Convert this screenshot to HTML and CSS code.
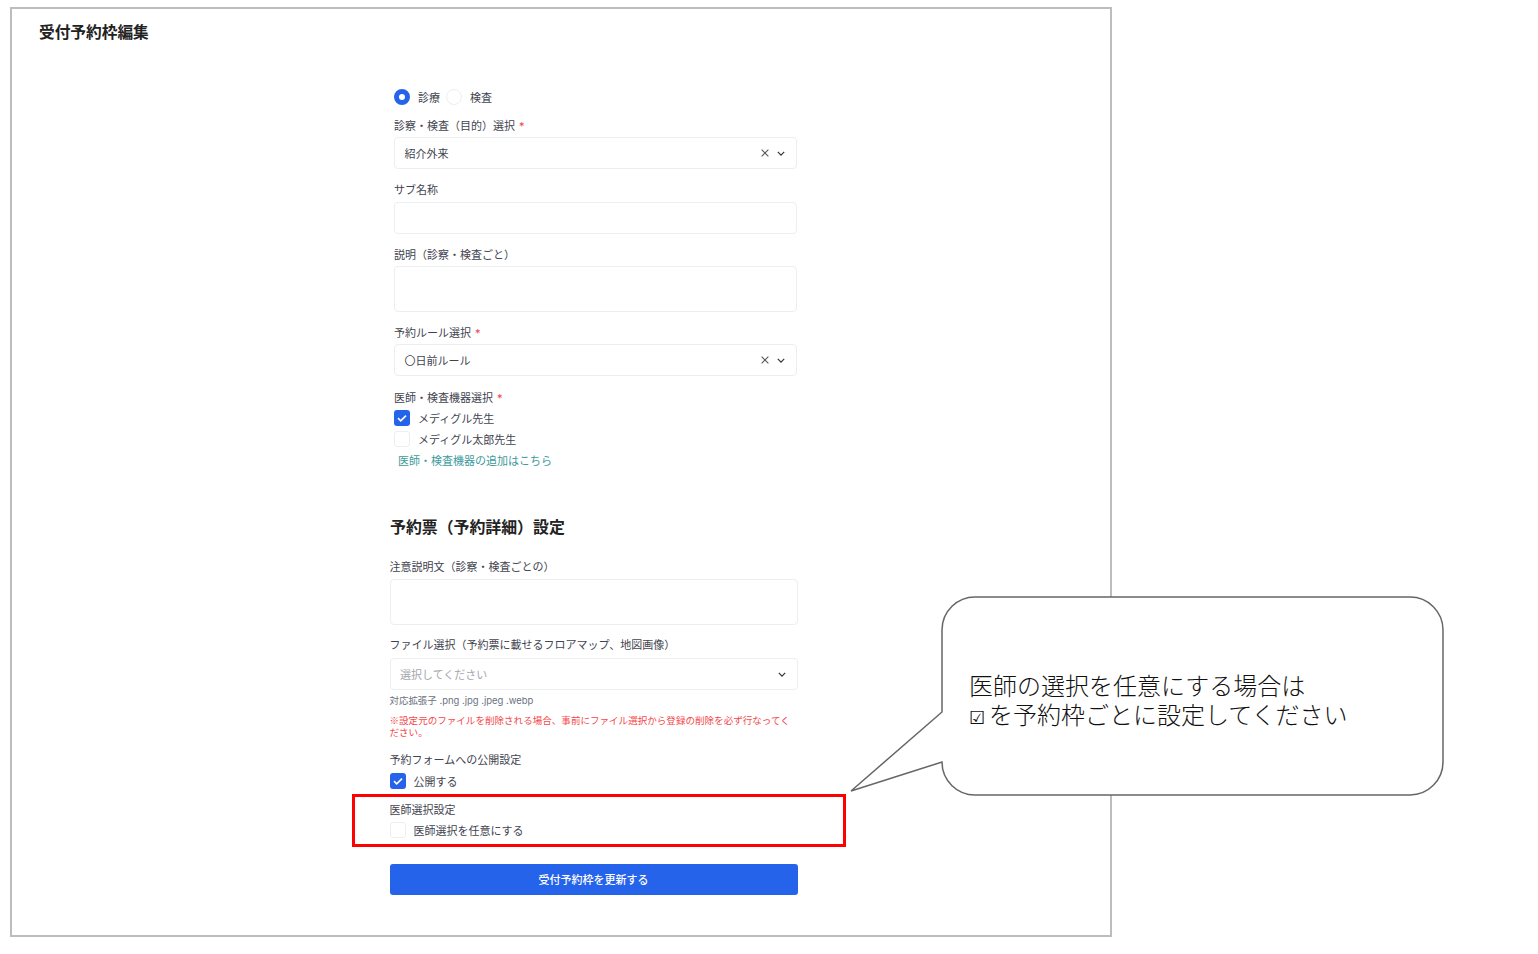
FILE: index.html
```html
<!DOCTYPE html>
<html lang="ja">
<head>
<meta charset="utf-8">
<title>受付予約枠編集</title>
<link rel="stylesheet" href="styles.css">
</head>
<body>
<main class="frame">
  <h1 class="title">受付予約枠編集</h1>
  <form class="form">
    <div class="upper">
      <div class="radios">
        <span class="radio radio-on"></span><span class="opt">診療</span>
        <span class="radio"></span><span class="opt">検査</span>
      </div>
      <div class="label">診察・検査（目的）選択<span class="req">*</span></div>
      <div class="box select"><span class="value">紹介外来</span>
        <svg class="ic-x" viewBox="0 0 10 10"><path d="M.8.8l8.4 8.4M9.2.8L.8 9.2"/></svg>
        <svg class="ic-chev" viewBox="0 0 10 6"><path d="M1 1l4 4 4-4"/></svg>
      </div>
      <div class="label roomy">サブ名称</div>
      <div class="box"></div>
      <div class="label">説明（診察・検査ごと）</div>
      <div class="box tall"></div>
      <div class="label">予約ルール選択<span class="req">*</span></div>
      <div class="box select"><span class="value">〇日前ルール</span>
        <svg class="ic-x" viewBox="0 0 10 10"><path d="M.8.8l8.4 8.4M9.2.8L.8 9.2"/></svg>
        <svg class="ic-chev" viewBox="0 0 10 6"><path d="M1 1l4 4 4-4"/></svg>
      </div>
      <div class="label loose">医師・検査機器選択<span class="req">*</span></div>
      <div class="check-row">
        <span class="check check-on"><svg viewBox="0 0 16 16"><path d="M4 8.2l2.7 2.6L12 5.6"/></svg></span><span class="opt">メディグル先生</span>
      </div>
      <div class="check-row next">
        <span class="check"></span><span class="opt">メディグル太郎先生</span>
      </div>
      <a class="link" href="#">医師・検査機器の追加はこちら</a>
    </div>

    <h2 class="section">予約票（予約詳細）設定</h2>

    <div class="label flush">注意説明文（診察・検査ごとの）</div>
    <div class="box tall"></div>
    <div class="label file">ファイル選択（予約票に載せるフロアマップ、地図画像）</div>
    <div class="box select"><span class="value placeholder">選択してください</span>
      <svg class="ic-chev" viewBox="0 0 10 6"><path d="M1 1l4 4 4-4"/></svg>
    </div>
    <p class="hint">対応拡張子 .png .jpg .jpeg .webp</p>
    <p class="warn">※設定元のファイルを削除される場合、事前にファイル選択から登録の削除を必ず行なってください。</p>
    <div class="label wide">予約フォームへの公開設定</div>
    <div class="check-row">
      <span class="check check-on"><svg viewBox="0 0 16 16"><path d="M4 8.2l2.7 2.6L12 5.6"/></svg></span><span class="opt">公開する</span>
    </div>
    <div class="label roomy">医師選択設定</div>
    <div class="check-row">
      <span class="check"></span><span class="opt">医師選択を任意にする</span>
    </div>
    <button class="submit" type="button">受付予約枠を更新する</button>
  </form>
</main>

<div class="highlight"></div>

<aside class="callout">
  <svg class="callout-shape" viewBox="0 0 600 204"><path d="M126 1H560a33 33 0 0 1 33 33V166a33 33 0 0 1-33 33H126a33 33 0 0 1-34-33L1 195L92 116V34a33 33 0 0 1 34-33z"/></svg>
  <p class="callout-text">医師の選択を任意にする場合は<br><span class="tick">☑</span>を予約枠ごとに設定してください</p>
</aside>
</body>
</html>
```
FILE: styles.css
```css
* { box-sizing: border-box; }
html, body { margin: 0; padding: 0; background: #fff; }
body {
  width: 1538px;
  height: 954px;
  position: relative;
  overflow: hidden;
  font-family: Inter, "Noto Sans CJK JP", sans-serif;
  font-size: 11px;
  color: #3f4450;
}
.frame {
  width: 1102px;
  height: 930px;
  margin: 7px 0 0 10px;
  border: 2px solid #bdbdbd;
  padding: 12px 0 0 27px;
  float: left;
}
.title {
  margin: 0;
  font-size: 15.7px;
  line-height: 24px;
  font-weight: 700;
  color: #222;
}
.form {
  width: 408px;
  margin: 44px 0 0 350.5px;
}
.upper { padding: 0 0.5px 0 4.5px; }
.radios, .check-row { display: flex; align-items: center; height: 16px; }
.radio {
  width: 16px; height: 16px;
  border-radius: 50%;
  border: 1px solid #eceef1;
  flex: none;
}
.radio-on { border: 5px solid #2563eb; background: #fff; }
.opt { margin: 0 6px 0 8px; padding-top: 1px; line-height: 16px; }
.label { margin-top: 14px; margin-bottom: 4px; line-height: 14px; }
.label.roomy { margin-bottom: 5px; }
.label.loose { margin-top: 15px; margin-bottom: 5px; }
.label.flush { margin-top: 20px; margin-bottom: 5px; }
.label.file { margin-top: 13px; margin-bottom: 6px; }
.label.wide { margin-top: 15px; margin-bottom: 6px; }
.req { color: #ef4444; margin-left: 4px; }
.box {
  height: 32px;
  background: #fff;
  border: 1px solid #eceef1;
  border-radius: 4px;
}
.tall { height: 46px; }
.select { display: flex; align-items: center; padding: 0 11px 0 9.5px; }
.value { flex: 1; }
.placeholder { color: #a3a7ae; }
.ic-x { width: 8px; height: 8px; margin-right: 8px; fill: none; stroke: #555; stroke-width: 1.3; }
.ic-chev { width: 8px; height: 5px; fill: none; stroke: #333; stroke-width: 1.5; }
.check {
  width: 16px; height: 16px;
  flex: none;
  border: 1px solid #eceef1;
  border-radius: 3px;
  display: block;
}
.check svg { display: block; width: 16px; height: 16px; fill: none; stroke: #fff; stroke-width: 1.6; }
.check-on { background: #2563eb; border: 0; }
.check-row.next { margin-top: 5px; }
.link {
  display: block;
  margin: 7px 0 0 4px;
  line-height: 14px;
  color: #3d9a9c;
  text-decoration: none;
}
.section {
  margin: 48px 0 0;
  padding-left: 0.5px;
  font-size: 15.9px;
  line-height: 24px;
  font-weight: 700;
  color: #222;
}
.hint { margin: 5px 0 0; font-size: 9.46px; line-height: 12px; color: #6b7280; }
.warn {
  margin: 7px 0 0;
  font-family: "Noto Sans CJK JP", sans-serif;
  font-size: 9.56px;
  line-height: 12px;
  color: #f5484a;
}
.submit {
  display: block;
  width: 100%;
  height: 31px;
  margin-top: 26px;
  padding: 0 0 1px;
  border: 0;
  border-radius: 3px;
  background: #2563eb;
  color: #fff;
  font: 500 11px Inter, "Noto Sans CJK JP", sans-serif;
}
.highlight {
  position: absolute;
  left: 352px; top: 794px;
  width: 494px; height: 53px;
  border: 3px solid #ff0000;
}
.callout {
  position: absolute;
  left: 850px; top: 596px;
  width: 600px; height: 204px;
}
.callout-shape {
  position: absolute;
  left: 0; top: 0;
  width: 600px; height: 204px;
  fill: #fff;
  stroke: #666;
  stroke-width: 1.5;
}
.callout-text {
  position: absolute;
  left: 119px; top: 76px;
  margin: 0;
  font-size: 24px;
  line-height: 29px;
  font-weight: 300;
  color: #111;
  white-space: nowrap;
}
.tick { font-size: 18px; margin-right: 4px; }
```
